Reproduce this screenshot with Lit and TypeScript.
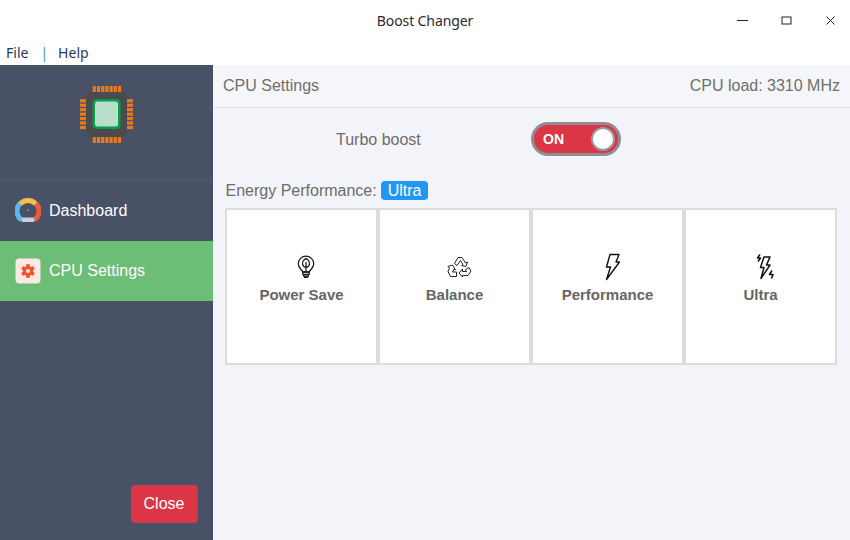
import { LitElement, html, css, svg } from "lit";
import { customElement } from "lit/decorators.js";

const range = (n: number) => Array.from({ length: n }, (_, i) => i);

const chip = html`<svg width="54" height="58" viewBox="0 0 54 58">
  ${range(7).map((i) => svg`
    <rect x="${12.7 + i * 4.2}" y="1" width="3.200" height="7" fill="#e8791c"/>
    <rect x="${12.7 + i * 4.2}" y="50" width="3.200" height="8" fill="#e8791c"/>
    <rect x="0" y="${14.2 + i * 4.45}" width="7" height="3.200" fill="#e8791c"/>
    <rect x="46" y="${14.2 + i * 4.45}" width="7" height="3.200" fill="#e8791c"/>`)}
  <rect x="6" y="7" width="41" height="45" rx="5" fill="#4b4a4f"/>
  <rect x="12.500" y="14" width="28" height="30" rx="4" fill="#0c9a4b"/>
  <rect x="15" y="16.500" width="23" height="25" rx="2.500" fill="#b8dfc9"/>
</svg>`;

const gauge = html`<svg width="26" height="26" viewBox="0 0 26 26">
  <path d="M6.500 22A11 11 0 0 1 5 5.500" fill="none" stroke="#5cb8ec" stroke-width="5"/>
  <path d="M5 6A11 11 0 0 1 21 6" fill="none" stroke="#f6bf4a" stroke-width="5"/>
  <path d="M21 5.500A11 11 0 0 1 19.500 22" fill="none" stroke="#ee5a3c" stroke-width="5"/>
  <rect x="6.500" y="19.500" width="13" height="4.500" rx="1.500" fill="#c9ced8"/>
  <circle cx="13" cy="12" r="1" fill="#8f98a8"/>
</svg>`;

const gear = html`<svg width="26" height="26" viewBox="0 0 26 26">
  <rect width="25" height="25" x="0.500" y="0.500" rx="4" fill="#fde8e3"/>
  <g fill="#f4512c" transform="translate(13 13)">
    ${range(6).map((i) => svg`<rect x="-1.800" y="-6.800" width="3.600" height="3.400" transform="rotate(${i * 60})"/>`)}
  </g>
  <circle cx="13" cy="13" r="3.600" fill="none" stroke="#f4512c" stroke-width="3"/>
</svg>`;

const bulb = html`<svg width="20" height="26" viewBox="0 0 22 28" fill="none" stroke="#1c1c1c" stroke-width="1.400">
  <path d="M7.500 19.500C6.500 17 2.500 15.500 2.500 10.500a8.500 8.500 0 0 1 17 0c0 5-4 6.500-5 9z"/>
  <path d="M11 4.500c-3.500 2-4.500 5.500-3.200 8 .7 1.300 2 2 3.200 2s2.500-.7 3.200-2c1.300-2.500.3-6-3.200-8zM11 8.500V19"/>
  <path d="M7.500 19.500h7v2.500h-7zM8.500 22v2h5v-2M9.500 24v1.500h3V24"/>
</svg>`;

const recycle = html`<svg width="25" height="22" viewBox="0 0 25 22" fill="none" stroke="#222" stroke-width="1" stroke-linejoin="round">
  <path d="M7.500 7.500 11 1.500H15L18.500 7 20.500 6 19 10.500 14.500 9.500 16 8.500 13.500 4.500 10 9.500Z"/>
  <path d="M5.500 9 1 10.500 2.500 12 1 15.500 3.500 20.500H9.500V16H5.500L7 13 8.500 14Z"/>
  <path d="M15.500 13 12 17 15.500 21V19.500H21L24 15 22 11.500 18.500 13.500 19.500 15.500H15.500Z"/>
</svg>`;

const bolt = html`<svg width="18" height="28" viewBox="0 0 18 28" fill="none" stroke="#111" stroke-width="1.400" stroke-linejoin="round">
  <path d="M7 1.500h9l-3 7.500h3.500L3.500 26.500 7.500 14H3.500z"/>
</svg>`;

const bolts = html`<svg width="20" height="28" viewBox="0 0 20 28" fill="none" stroke="#111" stroke-width="1.500" stroke-linejoin="round">
  <path d="M9 4 5.500 14.500h3.500l-3 11 9-13.500h-3.500l3.500-8z"/>
  <path d="M5 1.500 2.500 5h3L3 8.500M17 17.500 14.500 21.500h3.500l-1.500 4"/>
</svg>`;

@customElement("app-root")
export class AppRoot extends LitElement {
  static styles = css`
    :host {
      display: flex;
      flex-direction: column;
      width: 850px;
      height: 540px;
      background: #fff;
      overflow: hidden;
      font-family: "Liberation Sans", Arial, sans-serif;
    }
    .titlebar {
      height: 42px;
      flex: none;
      box-sizing: border-box;
      padding-bottom: 1px;
      display: grid;
      grid-template-columns: 1fr auto 1fr;
      align-items: center;
      font: 14px "Noto Sans", sans-serif;
      letter-spacing: -0.1px;
      color: #2b2b2b;
    }
    .title { grid-column: 2; }
    .winctl {
      grid-column: 3;
      justify-self: end;
      display: flex;
      align-items: center;
      gap: 33px;
      padding-right: 14px;
    }
    .winctl svg { display: block; }
    .menu {
      height: 23px;
      flex: none;
      box-sizing: border-box;
      padding: 0 0 2px 6px;
      display: flex;
      align-items: center;
      font: 14px "Noto Sans", sans-serif;
      color: #1f3a5c;
    }
    .sep { color: #3f8fd8; margin: 0 10px 0 12px; }
    .main { flex: 1; display: flex; min-height: 0; }
    .side {
      width: 213px;
      flex: none;
      background: #495167;
      display: flex;
      flex-direction: column;
    }
    .logo {
      height: 116px;
      flex: none;
      box-sizing: border-box;
      border-bottom: 1px solid #525a70;
      display: flex;
      justify-content: center;
      padding-top: 20px;
    }
    .logo svg { display: block; }
    .nav {
      height: 60px;
      flex: none;
      display: flex;
      align-items: center;
      gap: 8px;
      padding-left: 15px;
      color: #fff;
      font-size: 16px;
    }
    .nav svg { display: block; }
    .nav.active { background: #6cbd75; }
    .spacer { flex: 1; }
    .close {
      align-self: flex-end;
      margin: 0 15px 17px 0;
      box-sizing: border-box;
      padding-right: 1px;
      width: 67px;
      height: 38px;
      border-radius: 4px;
      background: #dc3545;
      color: #fff;
      font-size: 16px;
      display: flex;
      align-items: center;
      justify-content: center;
    }
    .content {
      flex: 1;
      background: #f3f4f9;
      display: flex;
      flex-direction: column;
      color: #6c6c6c;
    }
    .head {
      height: 43px;
      flex: none;
      box-sizing: border-box;
      border-bottom: 1px solid #e4e5ea;
      background: #f5f6fa;
      display: flex;
      align-items: center;
      justify-content: space-between;
      padding: 0 10px;
      font-size: 16px;
      color: #6f6f6f;
    }
    .turbo {
      display: flex;
      align-items: center;
      height: 34px;
      margin-top: 14px;
      font-size: 16px;
    }
    .turbo .label { width: 195px; margin: 1px 0 0 123px; }
    .toggle {
      box-sizing: border-box;
      width: 90px;
      height: 34px;
      border-radius: 17px;
      border: 3px solid #8e8e93;
      background: #dc3545;
      color: #fff;
      font-weight: bold;
      font-size: 14px;
      display: flex;
      align-items: center;
      justify-content: space-between;
      padding: 0 3px 0 9px;
    }
    .knob {
      box-sizing: border-box;
      width: 24px;
      height: 24px;
      border-radius: 50%;
      background: #fff;
      border: 2px solid #9a9a9e;
    }
    .energy {
      display: flex;
      align-items: center;
      gap: 4px;
      margin: 25px 0 0 12.5px;
      height: 19px;
      font-size: 16px;
    }
    .badge {
      background: #2196f3;
      color: #fff;
      border-radius: 4px;
      padding: 0 7px;
      height: 19px;
      line-height: 19px;
    }
    .grid {
      display: grid;
      grid-template-columns: repeat(4, 153px);
      margin: 8px 0 0 12px;
      width: 612px;
    }
    .card {
      box-sizing: border-box;
      height: 157px;
      background: #fff;
      border: 2px solid #dcdcdc;
      display: flex;
      flex-direction: column;
      align-items: center;
      padding-top: 43px;
      font-weight: bold;
      font-size: 15px;
      color: #666;
    }
    .ico {
      height: 28px;
      display: flex;
      align-items: center;
      justify-content: center;
      margin-bottom: 5px;
      padding-left: 9px;
    }
    .ico svg { display: block; }
  `;

  render() {
    const cards = [
      ["Power Save", bulb],
      ["Balance", recycle],
      ["Performance", bolt],
      ["Ultra", bolts],
    ];
    return html`
      <div class="titlebar">
        <div class="title">Boost Changer</div>
        <div class="winctl">
          <svg width="11" height="11" viewBox="0 0 11 11"><path d="M0 5.500h11" stroke="#222" stroke-width="1"/></svg>
          <svg width="11" height="11" viewBox="0 0 11 11"><rect x="1" y="2" width="9" height="7" fill="none" stroke="#222" stroke-width="1"/></svg>
          <svg width="11" height="11" viewBox="0 0 11 11"><path d="M1.500 1.500l8 8m0-8l-8 8" stroke="#222" stroke-width="1"/></svg>
        </div>
      </div>
      <div class="menu"><span>File</span><span class="sep">|</span><span>Help</span></div>
      <div class="main">
        <div class="side">
          <div class="logo">${chip}</div>
          <div class="nav">${gauge}<span>Dashboard</span></div>
          <div class="nav active">${gear}<span>CPU Settings</span></div>
          <div class="spacer"></div>
          <div class="close">Close</div>
        </div>
        <div class="content">
          <div class="head"><span>CPU Settings</span><span>CPU load: 3310 MHz</span></div>
          <div class="turbo">
            <span class="label">Turbo boost</span>
            <div class="toggle"><span>ON</span><div class="knob"></div></div>
          </div>
          <div class="energy"><span>Energy Performance:</span><span class="badge">Ultra</span></div>
          <div class="grid">
            ${cards.map(([n, i]) => html`<div class="card"><div class="ico">${i}</div><span>${n}</span></div>`)}
          </div>
        </div>
      </div>
    `;
  }
}
